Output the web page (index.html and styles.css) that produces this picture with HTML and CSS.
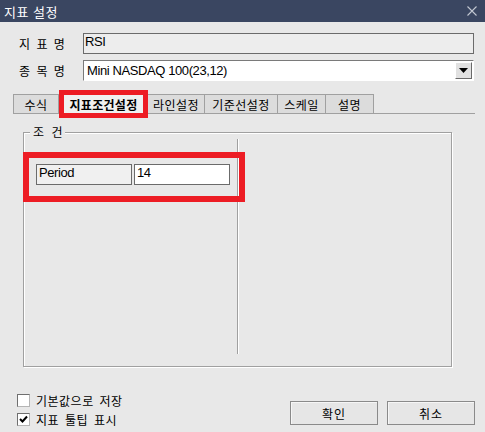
FILE: index.html
```html
<!DOCTYPE html>
<html lang="ko">
<head>
<meta charset="utf-8">
<title>지표 설정</title>
<link rel="stylesheet" href="styles.css">
</head>
<body>
<div class="window">
  <div class="titlebar">
    <span class="title">지표 설정</span>
    <svg class="close" width="10" height="10" viewBox="0 0 10 10"><path d="M0.5 0.5 L9.5 9.5 M9.5 0.5 L0.5 9.5" stroke="#c3c8d2" stroke-width="1.1" fill="none"/></svg>
  </div>

  <div class="form">
    <div class="row">
      <span class="label">지 표 명</span>
      <div class="field readonly">RSI</div>
    </div>
    <div class="row">
      <span class="label">종 목 명</span>
      <div class="field combo">
        <span class="combo-text">Mini NASDAQ 100(23,12)</span>
        <span class="drop"><svg width="9" height="5" viewBox="0 0 9 5"><path d="M0 0 H9 L4.5 5 Z" fill="#000"/></svg></span>
      </div>
    </div>
  </div>

  <div class="tabs">
    <div class="tab first w46">수식</div>
    <div class="tab active">지표조건설정</div>
    <div class="tab w57">라인설정</div>
    <div class="tab w72">기준선설정</div>
    <div class="tab w48">스케일</div>
    <div class="tab w48">설명</div>
  </div>

  <div class="group">
    <span class="legend">조 건</span>
    <div class="cols">
      <div class="left">
        <div class="param-row">
          <div class="param-name">Period</div>
          <div class="param-val">14</div>
        </div>
      </div>
      <div class="divider"></div>
    </div>
    <div class="highlight"></div>
  </div>

  <div class="footer">
    <div class="checks">
      <label class="check"><span class="box"></span><span class="ko">기본값으로 저장</span></label>
      <label class="check"><span class="box checked"><svg width="9" height="9" viewBox="0 0 9 9"><path d="M1 4 L3.5 6.5 L8 1.5" stroke="#000" stroke-width="2" fill="none"/></svg></span><span class="ko">지표 툴팁 표시</span></label>
    </div>
    <div class="buttons">
      <div class="btn">확인</div>
      <div class="btn">취소</div>
    </div>
  </div>
</div>
</body>
</html>
```

FILE: styles.css
```css
html, body {
  margin: 0;
  padding: 0;
  background: #e8e8e8;
}
.window {
  width: 485px;
  height: 432px;
  background: #e8e8e8;
  font-family: "Liberation Sans", "Noto Sans CJK KR", sans-serif;
  font-size: 12px;
  color: #000;
  overflow: hidden;
}
.titlebar {
  height: 22px;
  background: #3a4661;
  display: flex;
  align-items: center;
  justify-content: space-between;
  padding: 0 8px 0 4px;
}
.title {
  font-family: "Noto Sans CJK KR", sans-serif;
  font-size: 13px;
  color: #fff;
  letter-spacing: 0.5px;
}
.close { display: block; }

.form {
  margin-top: 11px;
  padding-left: 19px;
  display: flex;
  flex-direction: column;
  gap: 6px;
}
.row {
  display: grid;
  grid-template-columns: 64px 391px;
  align-items: center;
  height: 21px;
}
.label {
  font-family: "Noto Sans CJK KR", sans-serif;
  font-size: 12px;
  letter-spacing: 1px;
  word-spacing: 1px;
}
.field {
  box-sizing: border-box;
  height: 21px;
  font-size: 13px;
  letter-spacing: -0.4px;
}
.readonly {
  border: 1px solid #6b6b6b;
  background: #ededed;
  padding: 0 1px;
  line-height: 15px;
}
.combo {
  border-top: 1px solid #7a7a7a;
  border-left: 1px solid #7a7a7a;
  border-right: 1px solid #fff;
  border-bottom: 1px solid #fff;
  background: #fff;
  display: flex;
  align-items: center;
  justify-content: space-between;
  padding: 0 1px 0 3px;
}
.drop {
  box-sizing: border-box;
  width: 17px;
  height: 17px;
  background: #e1e1e1;
  border-top: 1px solid #fff;
  border-left: 1px solid #fff;
  border-right: 1px solid #6a6a6a;
  border-bottom: 1px solid #6a6a6a;
  display: flex;
  align-items: center;
  justify-content: center;
}
.drop svg { display: block; }

.tabs {
  margin: 13px 0 0 13px;
  width: 462px;
  height: 19px;
  border-bottom: 1px solid #a0a0a0;
  display: flex;
  align-items: flex-end;
}
.tab {
  box-sizing: border-box;
  height: 19px;
  background: #dcdcdc;
  border-top: 1px solid #a0a0a0;
  border-right: 1px solid #a0a0a0;
  display: flex;
  align-items: center;
  justify-content: center;
  font-family: "Noto Sans CJK KR", sans-serif;
  font-size: 12px;
  letter-spacing: 0.5px;
}
.tab.first { border-left: 1px solid #a0a0a0; }
.w46 { width: 46px; }
.w57 { width: 57px; }
.w72 { width: 73px; }
.w48 { width: 48px; }
.tab.active {
  position: relative;
  z-index: 1;
  width: 89px;
  height: 28px;
  margin-bottom: -5px;
  border: 5px solid #ed1c24;
  background: #f0f0f0;
  font-weight: bold;
  letter-spacing: 0.3px;
}

.group {
  position: relative;
  box-sizing: border-box;
  margin: 18px 0 0 23px;
  width: 429px;
  height: 235px;
  border: 1px solid #a0a0a0;
  box-shadow: inset 1px 1px 0 #fff, 1px 1px 0 #fff;
}
.legend {
  position: absolute;
  left: 6px;
  top: -9px;
  padding: 0 3px;
  background: #e8e8e8;
  font-family: "Noto Sans CJK KR", sans-serif;
  font-size: 12px;
  line-height: 16px;
  word-spacing: 4px;
}
.cols {
  display: flex;
  height: 100%;
}
.left {
  box-sizing: border-box;
  width: 213px;
  padding: 31px 0 0 12px;
}
.divider {
  margin-top: 6px;
  width: 1px;
  height: 215px;
  background: #a0a0a0;
  box-shadow: 1px 0 0 #fff;
}
.param-row {
  display: flex;
  gap: 2px;
}
.param-name, .param-val {
  box-sizing: border-box;
  width: 96px;
  height: 21px;
  border: 1px solid #6b6b6b;
  font-size: 13px;
  letter-spacing: -0.4px;
  line-height: 15px;
  padding: 0 2px;
}
.param-name { background: #f0f0f0; }
.param-val { background: #fff; }
.highlight {
  position: absolute;
  box-sizing: border-box;
  left: -1px;
  top: 19px;
  width: 222px;
  height: 50px;
  border: 6px solid #ed1c24;
}

.footer {
  margin-top: 27px;
  padding: 0 10px 0 17px;
  display: flex;
  justify-content: space-between;
  align-items: flex-start;
}
.checks {
  display: flex;
  flex-direction: column;
  gap: 6px;
}
.check {
  display: flex;
  align-items: center;
  gap: 6px;
  height: 13px;
}
.box {
  box-sizing: border-box;
  width: 13px;
  height: 13px;
  background: #fff;
  border-top: 1px solid #6f6f6f;
  border-left: 1px solid #6f6f6f;
  border-right: 1px solid #b5b5b5;
  border-bottom: 1px solid #b5b5b5;
  display: flex;
  align-items: center;
  justify-content: center;
}
.box svg { display: block; }
.ko {
  font-family: "Noto Sans CJK KR", sans-serif;
  font-size: 12px;
  letter-spacing: 0.5px;
  word-spacing: 2px;
}
.buttons {
  margin-top: 7px;
  display: flex;
  gap: 9px;
}
.btn {
  box-sizing: border-box;
  width: 88px;
  height: 24px;
  border: 1px solid #8a8a8a;
  background: #e6e6e6;
  box-shadow: inset 1px 1px 0 #f6f6f6;
  display: flex;
  align-items: center;
  justify-content: center;
  font-family: "Noto Sans CJK KR", sans-serif;
  font-size: 12px;
  letter-spacing: 1px;
}
```
